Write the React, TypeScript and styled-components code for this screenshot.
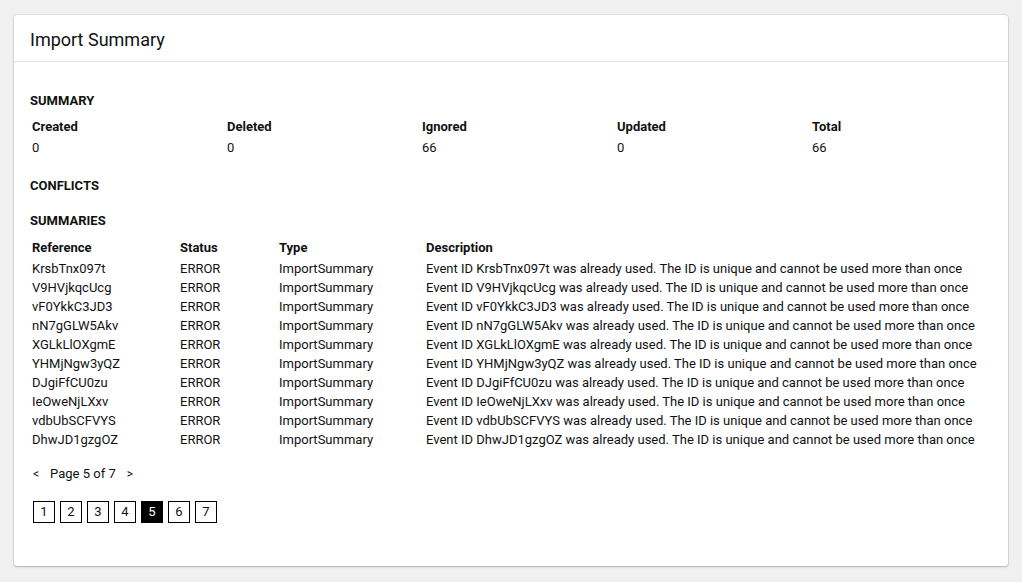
import React from "react";
import styled, { createGlobalStyle } from "styled-components";

const GlobalStyle = createGlobalStyle`
  html, body {
    margin: 0;
    padding: 0;
    background: #f0f0f0;
    font-family: Roboto, "Liberation Sans", Arial, sans-serif;
    color: #111;
  }
  * { box-sizing: border-box; }
`;

const Page = styled.div`
  padding: 15px 14px 16px 14px;
`;

const Card = styled.section`
  background: #fff;
  border-radius: 3px;
  box-shadow: 0 0 0 1px rgba(0, 0, 0, 0.06), 0 1px 2px rgba(0, 0, 0, 0.22);
`;

const CardHeader = styled.header`
  height: 47px;
  display: flex;
  align-items: center;
  padding: 3px 16px 0 16px;
  border-bottom: 1px solid #e3e3e3;
`;

const Title = styled.h1`
  margin: 0;
  font-size: 18px;
  font-weight: 400;
  color: #111;
  line-height: 22px;
`;

const CardBody = styled.div`
  padding: 32px 16px 43px 16px;
  font-size: 13px;
  line-height: 14px;
`;

const SectionTitle = styled.h2<{ $mt?: number }>`
  margin: ${(p) => p.$mt ?? 0}px 0 0 0;
  font-size: 13px;
  line-height: 14px;
  font-weight: 700;
  text-transform: uppercase;
  color: #111;
`;

const StatsGrid = styled.div`
  display: grid;
  grid-template-columns: repeat(5, 195px);
  margin-top: 12px;
  padding-left: 2px;
`;

const Stat = styled.div`
  display: flex;
  flex-direction: column;
  gap: 7px;
`;

const StatLabel = styled.div`
  font-weight: 700;
`;

const StatValue = styled.div``;

const Table = styled.table`
  margin-top: 13px;
  border-collapse: collapse;
  border-spacing: 0;
  font-size: 13px;
  line-height: 14px;
`;

const Th = styled.th<{ $w?: number }>`
  text-align: left;
  font-weight: 700;
  padding: 0 2px 7px 2px;
  width: ${(p) => (p.$w ? `${p.$w}px` : "auto")};
  vertical-align: top;
`;

const Td = styled.td`
  padding: 0 2px 5px 2px;
  white-space: nowrap;
  vertical-align: top;
`;

const PagerRow = styled.div`
  display: flex;
  align-items: center;
  gap: 11px;
  margin-top: 15px;
  padding-left: 3px;
  line-height: 14px;
`;

const Arrow = styled.span`
  font-size: 12px;
`;

const PageButtons = styled.div`
  display: flex;
  gap: 5px;
  margin-top: 20px;
  padding-left: 3px;
`;

const PageButton = styled.span<{ $active?: boolean }>`
  width: 22px;
  height: 22px;
  border: 1px solid #000;
  display: flex;
  align-items: center;
  justify-content: center;
  font-size: 13px;
  background: ${(p) => (p.$active ? "#000" : "#fff")};
  color: ${(p) => (p.$active ? "#fff" : "#111")};
`;

const refs = [
  "KrsbTnx097t",
  "V9HVjkqcUcg",
  "vF0YkkC3JD3",
  "nN7gGLW5Akv",
  "XGLkLlOXgmE",
  "YHMjNgw3yQZ",
  "DJgiFfCU0zu",
  "IeOweNjLXxv",
  "vdbUbSCFVYS",
  "DhwJD1gzgOZ",
];

const stats = [
  { label: "Created", value: "0" },
  { label: "Deleted", value: "0" },
  { label: "Ignored", value: "66" },
  { label: "Updated", value: "0" },
  { label: "Total", value: "66" },
];

export default function App() {
  return (
    <>
      <GlobalStyle />
      <Page>
        <Card>
          <CardHeader>
            <Title>Import Summary</Title>
          </CardHeader>
          <CardBody>
            <SectionTitle>Summary</SectionTitle>
            <StatsGrid>
              {stats.map((s) => (
                <Stat key={s.label}>
                  <StatLabel>{s.label}</StatLabel>
                  <StatValue>{s.value}</StatValue>
                </Stat>
              ))}
            </StatsGrid>
            <SectionTitle $mt={24}>Conflicts</SectionTitle>
            <SectionTitle $mt={21}>Summaries</SectionTitle>
            <Table>
              <thead>
                <tr>
                  <Th $w={148}>Reference</Th>
                  <Th $w={99}>Status</Th>
                  <Th $w={147}>Type</Th>
                  <Th>Description</Th>
                </tr>
              </thead>
              <tbody>
                {refs.map((r) => (
                  <tr key={r}>
                    <Td>{r}</Td>
                    <Td>ERROR</Td>
                    <Td>ImportSummary</Td>
                    <Td>
                      Event ID {r} was already used. The ID is unique and cannot be used more than once
                    </Td>
                  </tr>
                ))}
              </tbody>
            </Table>
            <PagerRow>
              <Arrow>&lt;</Arrow>
              <span>Page 5 of 7</span>
              <Arrow>&gt;</Arrow>
            </PagerRow>
            <PageButtons>
              {[1, 2, 3, 4, 5, 6, 7].map((n) => (
                <PageButton key={n} $active={n === 5}>
                  {n}
                </PageButton>
              ))}
            </PageButtons>
          </CardBody>
        </Card>
      </Page>
    </>
  );
}
